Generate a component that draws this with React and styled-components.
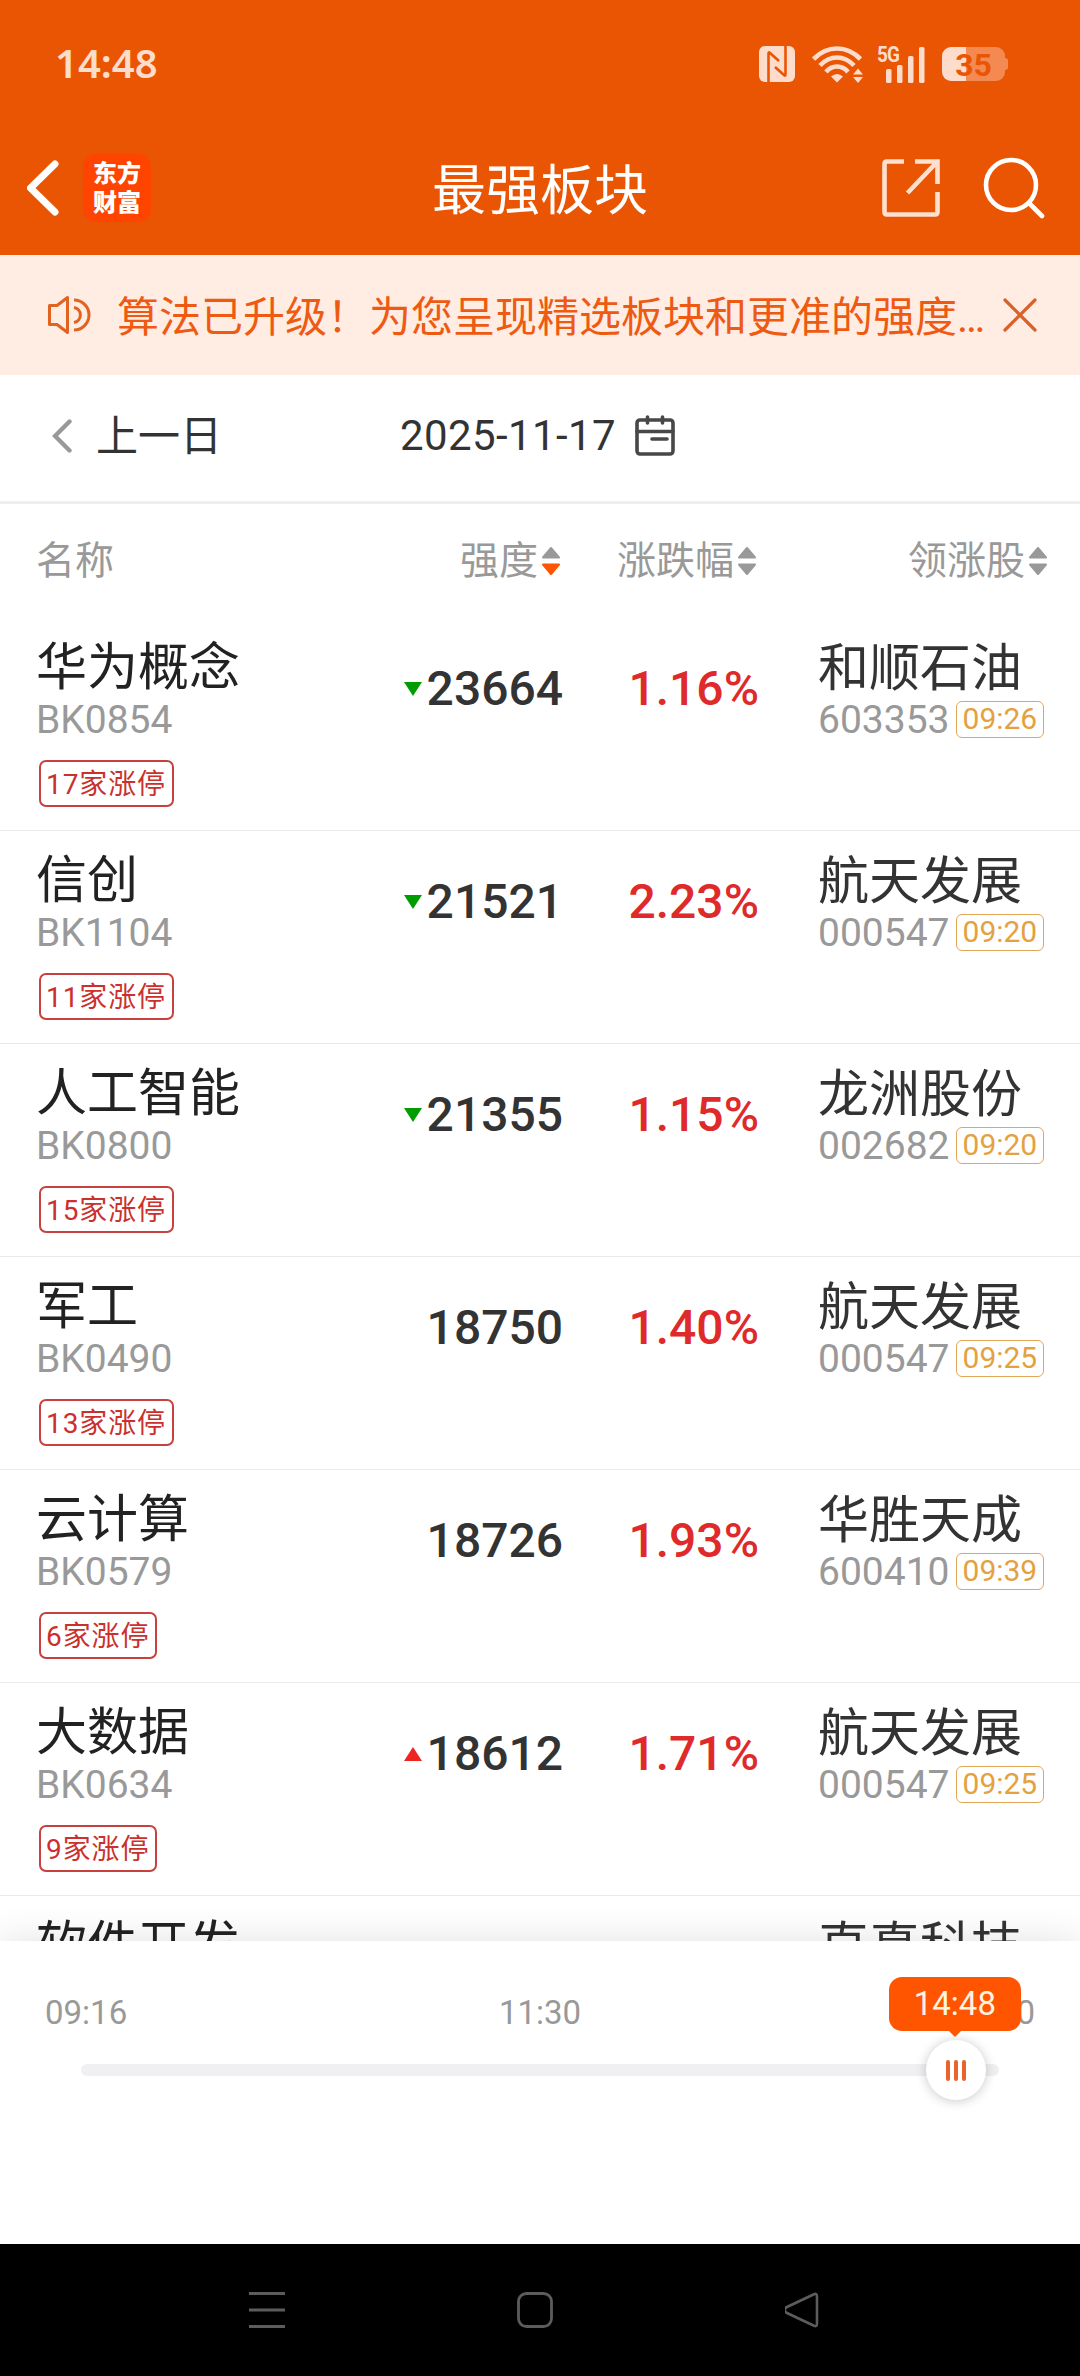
import React from "react";
import styled, { createGlobalStyle } from "styled-components";

const GlobalStyle = createGlobalStyle`
  * {
    box-sizing: border-box;
  }
  body {
    margin: 0;
    background: #fff;
    font-family: Roboto, "Noto Sans CJK SC", sans-serif;
    color: #333;
  }
  svg {
    display: block;
    flex: none;
  }
`;

const Screen = styled.div`
  width: 1080px;
  height: 2376px;
  display: flex;
  flex-direction: column;
  overflow: hidden;
  background: #fff;
`;

const Top = styled.header`
  height: 255px;
  flex: none;
  background: #ea5504;
`;

const StatusBar = styled.div`
  height: 128px;
  padding: 0 72px 0 55px;
  display: flex;
  align-items: center;
  justify-content: space-between;
`;

const Clock = styled.div`
  padding-bottom: 3px;
  font-family: "Noto Sans", sans-serif;
  font-size: 40px;
  font-weight: 600;
  line-height: 48px;
  color: #fddccb;
`;

const StatusIcons = styled.div`
  display: flex;
  align-items: center;
`;

const Signal = styled.div`
  display: flex;
  align-items: flex-start;
  height: 37px;
  margin: 0 17px 0 14px;
`;

const NetworkType = styled.span`
  width: 9px;
  font-size: 22px;
  font-weight: 700;
  line-height: 17px;
  letter-spacing: -1px;
  color: #fddccb;
  white-space: nowrap;
  transform: scaleX(0.86);
  transform-origin: left;
`;

const Battery = styled.div`
  display: flex;
  align-items: center;

  &::after {
    content: "";
    width: 3px;
    height: 12px;
    border-radius: 0 3px 3px 0;
    background: #f48a52;
  }
`;

const BatteryLevel = styled.div`
  width: 63px;
  height: 34px;
  border-radius: 9px;
  background: linear-gradient(to right, #fddccb 38%, #f48a52 38%);
  color: #ea5504;
  font-size: 32px;
  font-weight: 700;
  line-height: 36px;
  text-align: center;
`;

const TitleBar = styled.div`
  height: 127px;
  padding: 0 35px 8px 27px;
  display: grid;
  grid-template-columns: 1fr auto 1fr;
  align-items: center;
`;

const TitleSide = styled.div`
  display: flex;
  align-items: center;
  justify-content: ${({ $end }) => ($end ? "flex-end" : "flex-start")};
  gap: ${({ $end }) => ($end ? "43px" : "24px")};
`;

const Logo = styled.div`
  width: 68px;
  height: 68px;
  padding: 3px 0;
  border-radius: 13px;
  background: #ff4400;
  color: #fff;
  font-family: "Noto Sans CJK SC", sans-serif;
  font-size: 24px;
  font-weight: 900;
  line-height: 29px;
  text-align: center;
`;

const Title = styled.h1`
  margin: 0;
  padding: 8px 0 0 8px;
  font-size: 54px;
  font-weight: 400;
  line-height: 64px;
  color: #fff;
`;

const Notice = styled.div`
  height: 120px;
  flex: none;
  padding: 0 43px 0 46px;
  display: flex;
  align-items: center;
  background: #ffece3;
  color: #ee5a12;
`;

const NoticeText = styled.div`
  margin-left: 23px;
  padding-top: 5px;
  flex: 1;
  font-size: 42px;
  line-height: 56px;
  white-space: nowrap;
`;

const DateBar = styled.div`
  height: 129px;
  flex: none;
  padding: 0 36px 5px 52px;
  display: flex;
  align-items: center;
  border-bottom: 3px solid #eee;
  font-size: 42px;
  line-height: 56px;
`;

const PrevDay = styled.div`
  width: 348px;
  display: flex;
  align-items: center;
  gap: 24px;
`;

const PrevLabel = styled.span`
  padding-top: 2px;
`;

const CurrentDay = styled.div`
  display: flex;
  align-items: center;
  gap: 19px;
  letter-spacing: 0.4px;
`;

const columns = "351px 176px 196px 1fr";

const TableHead = styled.div`
  height: 114px;
  flex: none;
  padding: 0 33px 0 36px;
  display: grid;
  grid-template-columns: ${columns};
  align-items: center;
  font-size: 39px;
  line-height: 50px;
  color: #999;
`;

const HeadCell = styled.div`
  display: flex;
  align-items: center;
  justify-content: ${({ $left }) => ($left ? "flex-start" : "flex-end")};
  gap: 4px;
  padding-right: ${({ $inset }) => $inset || 0}px;
`;

const Rows = styled.div`
  flex: 1;
  min-height: 0;
  overflow: hidden;
`;

const Row = styled.div`
  height: 213px;
  padding: 0 36px;
  display: grid;
  grid-template-columns: ${columns};
  border-bottom: 1px solid #e9e9e9;
`;

const NameCell = styled.div`
  padding-top: 21px;
`;

const Name = styled.div`
  font-size: 51px;
  line-height: 58px;
  color: #222;
`;

const Code = styled.div`
  font-size: 39px;
  line-height: 46px;
  color: #999;
`;

const LimitTag = styled.span`
  display: inline-block;
  height: 47px;
  margin: 17px 0 0 3px;
  padding: 0 6px 0 5px;
  border: 2px solid #c8413f;
  border-radius: 7px;
  font-size: 28px;
  line-height: 45px;
  letter-spacing: 0.9px;
  color: #cb302d;
  vertical-align: top;
`;

const ValueCell = styled.div`
  padding-top: 43px;
  display: flex;
  align-items: center;
  justify-content: flex-end;
  align-self: start;
  gap: 5px;
  font-size: 48px;
  font-weight: 500;
  line-height: 56px;
  color: ${({ $red }) => ($red ? "#df2a2b" : "#333")};
`;

const LeaderCell = styled.div`
  padding: 23px 0 0 59px;
`;

const LeaderName = styled.div`
  font-size: 51px;
  line-height: 56px;
  white-space: nowrap;
`;

const LeaderInfo = styled.div`
  display: flex;
  align-items: center;
  gap: 6px;
`;

const TimeTag = styled.span`
  height: 37px;
  margin-top: -1px;
  padding: 0 6px;
  border: 1px solid #e2a657;
  border-radius: 6px;
  font-size: 30px;
  line-height: 34px;
  color: #e3a13f;
`;

const Sheet = styled.div`
  position: relative;
  height: 303px;
  flex: none;
  padding: 52px 45px 0;
  background: #fff;
  box-shadow: 0 0 36px rgba(0, 0, 0, 0.12);
`;

const TimeLabels = styled.div`
  display: flex;
  justify-content: space-between;
  font-size: 33px;
  line-height: 40px;
  color: #999;
`;

const Track = styled.div`
  position: relative;
  height: 12px;
  margin: 31px 36px 0;
  border-radius: 6px;
  background: #f0f0f2;
`;

const Thumb = styled.div`
  position: absolute;
  top: -24px;
  width: 60px;
  height: 60px;
  margin-left: -30px;
  border-radius: 50%;
  background: #fff;
  box-shadow: 0 1px 12px rgba(0, 0, 0, 0.22);
  display: flex;
  align-items: center;
  justify-content: center;
  gap: 4px;
`;

const Grip = styled.i`
  width: 4px;
  height: 21px;
  border-radius: 2px;
  background: #e8642a;
`;

const Bubble = styled.div`
  position: absolute;
  left: 50%;
  bottom: 69px;
  width: 132px;
  height: 54px;
  margin-left: -67px;
  border-radius: 13px;
  background: #ff5500;
  color: #fff3e2;
  font-size: 33px;
  line-height: 54px;
  text-align: center;

  &::after {
    content: "";
    position: absolute;
    left: 59px;
    top: 53px;
    border: 7px solid transparent;
    border-top-color: #ff5500;
    border-bottom: 0;
  }
`;

const NavBar = styled.nav`
  height: 132px;
  flex: none;
  padding-left: 249px;
  display: flex;
  align-items: center;
  gap: 232px;
  background: #000;
`;

const boards = [
  { name: "华为概念", code: "BK0854", limit: 17, trend: "down", strength: 23664, change: "1.16%", leader: "和顺石油", leaderCode: "603353", time: "09:26" },
  { name: "信创", code: "BK1104", limit: 11, trend: "down", strength: 21521, change: "2.23%", leader: "航天发展", leaderCode: "000547", time: "09:20" },
  { name: "人工智能", code: "BK0800", limit: 15, trend: "down", strength: 21355, change: "1.15%", leader: "龙洲股份", leaderCode: "002682", time: "09:20" },
  { name: "军工", code: "BK0490", limit: 13, strength: 18750, change: "1.40%", leader: "航天发展", leaderCode: "000547", time: "09:25" },
  { name: "云计算", code: "BK0579", limit: 6, strength: 18726, change: "1.93%", leader: "华胜天成", leaderCode: "600410", time: "09:39" },
  { name: "大数据", code: "BK0634", limit: 9, trend: "up", strength: 18612, change: "1.71%", leader: "航天发展", leaderCode: "000547", time: "09:25" },
  { name: "软件开发", leader: "直真科技" },
];

const NfcIcon = () => (
  <svg width="36" height="36" viewBox="0 0 36 36">
    <rect width="36" height="36" rx="6" fill="#fddccb" />
    <path
      d="M9.5 36V7.5Q9.5 5.500 11 7l9 8M26.500 0v28.500q0 2-1.500.5l-9-8"
      fill="none"
      stroke="#ea5504"
      strokeWidth="2.600"
    />
  </svg>
);

const WifiShape = styled.svg`
  margin-left: 17px;
`;

const WifiIcon = () => (
  <WifiShape width="51" height="37" viewBox="0 0 51 37">
    <g fill="none" stroke="#fddccb" strokeWidth="4.600">
      <path d="M1.500 13Q12 2.500 25 2.500T48.500 13" />
      <path d="M8 19.500Q15.500 11.500 25 11.500T42 19.500" />
      <path d="M14 26Q18.500 20.500 25 20.500T36 26" />
    </g>
    <path d="M19 30.500Q25 25.500 31 30.500L25 36.500zM41 28.500l5-6 5 6zM41 31l5 6 5-6z" fill="#fddccb" />
  </WifiShape>
);

const SignalIcon = () => (
  <svg width="39" height="37" viewBox="0 0 39 37">
    <g fill="#fddccb">
      <rect x="0" y="23" width="5.500" height="14" rx="1.500" />
      <rect x="11" y="19" width="5.500" height="18" rx="1.500" />
      <rect x="22" y="10" width="5.500" height="27" rx="1.500" />
      <rect x="33" y="1" width="5.500" height="36" rx="1.500" />
    </g>
  </svg>
);

const BackIcon = () => (
  <svg width="32" height="56" viewBox="0 0 32 56">
    <path d="M28 4 3.500 28 28 52" fill="none" stroke="#fff" strokeWidth="7" strokeLinecap="round" strokeLinejoin="round" />
  </svg>
);

const ShareIcon = () => (
  <svg width="58" height="58" viewBox="0 0 58 58">
    <path
      d="M22 2.500H5Q2.500 2.500 2.500 5v48q0 2.500 2.500 2.500h48q2.500 0 2.500-2.500V33M33 2.500h22.500V25M54 4 25.500 34"
      fill="none"
      stroke="#ffe0cf"
      strokeWidth="4.600"
    />
  </svg>
);

const SearchIcon = () => (
  <svg width="62" height="62" viewBox="0 0 62 62">
    <g fill="none" stroke="#fff" strokeWidth="4.600" strokeLinecap="round">
      <circle cx="28" cy="28" r="25" />
      <path d="M46.500 46.500 59 59" />
    </g>
  </svg>
);

const SpeakerIcon = () => (
  <svg width="48" height="40" viewBox="0 0 48 40">
    <g fill="none" stroke="#e2621f" strokeWidth="3" strokeLinejoin="round">
      <path d="M3.500 10.500h7.500L21.500 2.500v35L11 29.500H3.500z" />
      <path d="M28 5a15 15 0 0 1 0 30M28 12.500a7.600 7.600 0 0 1 0 15" />
    </g>
  </svg>
);

const CloseIcon = () => (
  <svg width="34" height="34" viewBox="0 0 34 34">
    <path d="M2 2l30 30M32 2 2 32" stroke="#d9622b" strokeWidth="3.200" strokeLinecap="round" />
  </svg>
);

const ChevronIcon = () => (
  <svg width="20" height="34" viewBox="0 0 20 34">
    <path d="M17.500 2.500 3 17l14.500 14.500" fill="none" stroke="#999" strokeWidth="4.400" strokeLinecap="round" />
  </svg>
);

const CalendarIcon = () => (
  <svg width="40" height="42" viewBox="0 0 40 42">
    <g fill="none" stroke="#484848" strokeWidth="3.600" strokeLinecap="round">
      <rect x="2" y="5" width="36" height="34" rx="3" />
      <path d="M2 16.500h36M12.500 2v6M27.500 2v6M17 24h15" />
    </g>
  </svg>
);

const SortIcon = ({ active }) => (
  <svg width="18" height="30" viewBox="0 0 18 30">
    <g strokeWidth="2" strokeLinejoin="round">
      <path d="M9 2 17 11.500H1z" fill="#999" stroke="#999" />
      <path d="M9 28 17 18.500H1z" fill={active ? "#ff5500" : "#999"} stroke={active ? "#ff5500" : "#999"} />
    </g>
  </svg>
);

const TrendIcon = ({ trend }) => (
  <svg width="18" height="14" viewBox="0 0 18 14">
    {trend === "up" ? <path d="M9 0l9 14H0z" fill="#ee2422" /> : <path d="M0 0h18L9 14z" fill="#009c00" />}
  </svg>
);

const BoardRow = ({ board }) => (
  <Row>
    <NameCell>
      <Name>{board.name}</Name>
      {board.code && <Code>{board.code}</Code>}
      {board.limit && <LimitTag>{board.limit}家涨停</LimitTag>}
    </NameCell>
    <ValueCell>
      {board.trend && <TrendIcon trend={board.trend} />}
      {board.strength}
    </ValueCell>
    <ValueCell $red>{board.change}</ValueCell>
    <LeaderCell>
      <LeaderName>{board.leader}</LeaderName>
      {board.leaderCode && (
        <LeaderInfo>
          <Code>{board.leaderCode}</Code>
          <TimeTag>{board.time}</TimeTag>
        </LeaderInfo>
      )}
    </LeaderCell>
  </Row>
);

const App = () => {
  // position of the handle along the trading day, in percent
  const progress = 95.3;

  return (
    <Screen>
      <GlobalStyle />
      <Top>
        <StatusBar>
          <Clock>14:48</Clock>
          <StatusIcons>
            <NfcIcon />
            <WifiIcon />
            <Signal>
              <NetworkType>5G</NetworkType>
              <SignalIcon />
            </Signal>
            <Battery>
              <BatteryLevel>35</BatteryLevel>
            </Battery>
          </StatusIcons>
        </StatusBar>
        <TitleBar>
          <TitleSide>
            <BackIcon />
            <Logo>
              东方
              <br />
              财富
            </Logo>
          </TitleSide>
          <Title>最强板块</Title>
          <TitleSide $end>
            <ShareIcon />
            <SearchIcon />
          </TitleSide>
        </TitleBar>
      </Top>

      <Notice>
        <SpeakerIcon />
        <NoticeText>算法已升级！为您呈现精选板块和更准的强度…</NoticeText>
        <CloseIcon />
      </Notice>

      <DateBar>
        <PrevDay>
          <ChevronIcon />
          <PrevLabel>上一日</PrevLabel>
        </PrevDay>
        <CurrentDay>
          2025-11-17
          <CalendarIcon />
        </CurrentDay>
      </DateBar>

      <TableHead>
        <HeadCell $left>名称</HeadCell>
        <HeadCell $inset={3}>
          强度
          <SortIcon active />
        </HeadCell>
        <HeadCell $inset={3}>
          涨跌幅
          <SortIcon />
        </HeadCell>
        <HeadCell>
          领涨股
          <SortIcon />
        </HeadCell>
      </TableHead>

      <Rows>
        {boards.map((board) => (
          <BoardRow key={board.name} board={board} />
        ))}
      </Rows>

      <Sheet>
        <TimeLabels>
          <span>09:16</span>
          <span>11:30</span>
          <span>15:00</span>
        </TimeLabels>
        <Track>
          <Thumb style={{ left: `${progress}%` }}>
            <Grip />
            <Grip />
            <Grip />
            <Bubble>14:48</Bubble>
          </Thumb>
        </Track>
      </Sheet>

      <NavBar>
        <svg width="36" height="36" viewBox="0 0 36 36">
          <path d="M0 1.500h36M0 18h36M0 34.500h36" stroke="#5c5c5c" strokeWidth="3" />
        </svg>
        <svg width="36" height="36" viewBox="0 0 36 36">
          <rect x="1.500" y="1.500" width="33" height="33" rx="8" fill="none" stroke="#5c5c5c" strokeWidth="2.800" />
        </svg>
        <svg width="36" height="36" viewBox="0 0 36 36">
          <path
            d="M29 2.200 1.500 15.200Q-2 18 1.500 20.800L29 33.800Q32 35 32 31.500V4.500Q32 1 29 2.200z"
            fill="none"
            stroke="#5c5c5c"
            strokeWidth="2.600"
          />
        </svg>
      </NavBar>
    </Screen>
  );
};

export default App;
